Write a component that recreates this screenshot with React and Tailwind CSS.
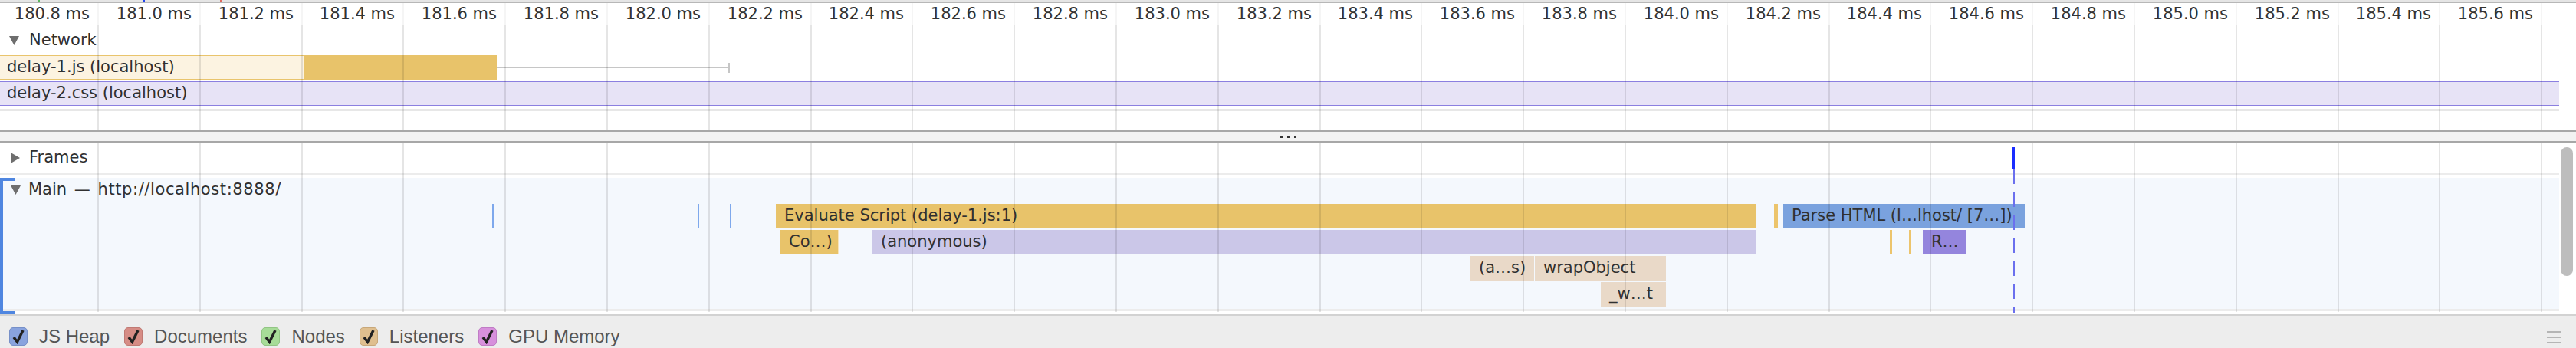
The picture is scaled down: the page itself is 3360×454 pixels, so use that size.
import React from "react";

const TICKS = Array.from({ length: 25 }, (_, i) => ({
  x: Math.round(127 + 132.8 * i),
  label: `${(180.8 + 0.2 * i).toFixed(1)} ms`,
}));

const BARS = [
  { row: 0, x: 642, w: 2, cls: "bg-[#7ea8ec]" },
  { row: 0, x: 910, w: 2, cls: "bg-[#7ea8ec]" },
  { row: 0, x: 952, w: 2, cls: "bg-[#7ea8ec]" },
  { row: 0, x: 1012, w: 1279, label: "Evaluate Script (delay-1.js:1)", cls: "bg-[#e8c36a]" },
  { row: 0, x: 2314, w: 5, cls: "bg-[#ecc46c]" },
  { row: 0, x: 2326, w: 315, label: "Parse HTML (l…lhost/ [7…])", cls: "bg-[#7aa2de]" },
  { row: 1, x: 1018, w: 75, label: "Co…)", cls: "bg-[#e8c36a]" },
  { row: 1, x: 1093, w: 2, cls: "bg-[#f6e4bd]" },
  { row: 1, x: 1138, w: 1153, label: "(anonymous)", cls: "bg-[#cbc7e8]" },
  { row: 1, x: 2465, w: 3, cls: "bg-[#ecc46c]" },
  { row: 1, x: 2490, w: 3, cls: "bg-[#ecc46c]" },
  { row: 1, x: 2508, w: 57, label: "R…", cls: "bg-[#9485dd]" },
  { row: 2, x: 1918, w: 83, label: "(a…s)", cls: "bg-[#e9d9c8]" },
  { row: 2, x: 2002, w: 171, label: "wrapObject", cls: "bg-[#e9d9c8]" },
  { row: 3, x: 2088, w: 85, label: "_w…t", cls: "bg-[#e9d9c8]" },
];

const COUNTERS = [
  { label: "JS Heap", cls: "bg-[#89a3de] border-[#7790c8]" },
  { label: "Documents", cls: "bg-[#d68c85] border-[#c07a74]" },
  { label: "Nodes", cls: "bg-[#a7dc98] border-[#92c584]" },
  { label: "Listeners", cls: "bg-[#dfbf8f] border-[#c8a87a]" },
  { label: "GPU Memory", cls: "bg-[#d790dc] border-[#c07cc5]" },
];

function Caret({ open }) {
  return open ? (
    <svg width="13" height="12" viewBox="0 0 13 12" className="shrink-0">
      <polygon points="0,0 13,0 6.5,12" fill="#6e6e6e" />
    </svg>
  ) : (
    <svg width="12" height="14" viewBox="0 0 12 14" className="shrink-0">
      <polygon points="0,0 12,7 0,14" fill="#6e6e6e" />
    </svg>
  );
}

function Check({ cls }) {
  return (
    <span className={`flex h-[24px] w-[24px] shrink-0 items-center justify-center rounded-[5px] border ${cls}`}>
      <svg width="18" height="20" viewBox="0 0 18 20">
        <polyline points="3,11 7.5,17 15,2" fill="none" stroke="#222" strokeWidth="3.5" strokeLinejoin="miter" />
      </svg>
    </span>
  );
}

export default function App() {
  return (
    <div className="relative h-[454px] w-[3360px] overflow-hidden bg-white font-['DejaVu_Sans',sans-serif] text-[21px] text-[#303030]">
      {/* overview strip */}
      <div className="relative h-[4px] border-b border-[#b7b7b7] bg-[#e5e5e5]">
        <div className="absolute left-[50px] top-0 h-[3px] w-[2px] bg-[#5cb85c]" />
        <div className="absolute left-[187px] top-0 h-[3px] w-[2px] bg-[#2244ee]" />
        <div className="absolute left-[287px] top-0 h-[3px] w-[2px] bg-[#e06a5e]" />
      </div>

      {/* ruler */}
      <div className="relative h-[29px] w-[3338px]">
        {TICKS.map((t) => (
          <React.Fragment key={t.label}>
            <div className="absolute top-0 h-full w-[2px] bg-black/[0.04]" style={{ left: t.x }} />
            <div
              className="absolute top-0 flex h-full items-center justify-end whitespace-nowrap text-[#333]"
              style={{ left: t.x - 210, width: 200 }}
            >
              {t.label}
            </div>
          </React.Fragment>
        ))}
      </div>

      {/* network */}
      <div className="w-[3338px]">
        <div className="flex h-[39px] items-center gap-[13px] pl-[12px]">
          <Caret open />
          <span>Network</span>
        </div>
        <div className="relative h-[32px]">
          <div className="absolute left-0 top-0 h-full w-[396px] border-y border-[#e9c46c] bg-[#fcf3e1]" />
          <div className="absolute left-[397px] top-0 h-full w-[251px] bg-[#e8c36a]" />
          <div className="absolute left-[648px] top-[15px] h-[2px] w-[303px] bg-[#c6c6c6]" />
          <div className="absolute left-[950px] top-[10px] h-[13px] w-[2px] bg-[#c6c6c6]" />
          <div className="relative flex h-full items-center whitespace-nowrap pl-[9px]">delay-1.js (localhost)</div>
        </div>
        <div className="h-[2px]" />
        <div className="flex h-[32px] items-center whitespace-nowrap border-y border-[#8b7fe0] bg-[#e7e3f6] pl-[9px]">
          delay-2.css (localhost)
        </div>
        <div className="h-[4px]" />
        <div className="h-[3px] bg-[#e7e7e7]" />
        <div className="h-[25px]" />
      </div>

      {/* splitter */}
      <div className="relative z-20 flex h-[16px] items-center justify-center gap-[6px] border-y-2 border-[#a7a7a7] bg-[#f2f2f2]">
        <span className="h-[3px] w-[3px] bg-[#333]" />
        <span className="h-[3px] w-[3px] bg-[#333]" />
        <span className="h-[3px] w-[3px] bg-[#333]" />
      </div>

      {/* frames */}
      <div className="relative">
        <div className="flex h-[40px] w-[3338px] items-center gap-[12px] pl-[14px]">
          <Caret />
          <span>Frames</span>
        </div>
        <div className="h-[2px] w-[3338px] bg-[#ececec]" />
        <div className="absolute right-[4px] top-[6px] h-[168px] w-[16px] rounded-full bg-[#bdbdbd]" />
      </div>

      {/* main thread */}
      <div className="relative h-[178px] w-[3338px]">
        <div className="absolute left-0 top-0 h-full w-[4px] bg-[#4f86e0]" />
        <div className="absolute left-0 top-0 h-[4px] w-[20px] bg-[#4f86e0]" />
        <div className="absolute bottom-0 left-0 h-[4px] w-[20px] bg-[#4f86e0]" />
        <div className="mt-[4px] h-[171px] bg-[#f4f8fd]">
          <div className="flex h-[32px] items-center gap-[10px] pl-[14px] whitespace-nowrap">
            <Caret open />
            <span>
              Main <span className="mx-[3px]">—</span> <span className="tracking-[0.6px]">http://localhost:8888/</span>
            </span>
          </div>
          <div className="relative mt-[2px] h-[136px]">
            {BARS.map((b, i) => (
              <div
                key={i}
                className={`absolute flex h-[32px] items-center overflow-hidden whitespace-nowrap ${b.label ? "pl-[11px]" : ""} ${b.cls}`}
                style={{ left: b.x, width: b.w, top: b.row * 34 }}
              >
                {b.label}
              </div>
            ))}
          </div>
        </div>
        <div className="h-[3px] bg-[#ececec]" />
      </div>

      {/* counters toolbar */}
      <div className="flex h-[48px] items-start border-t-2 border-[#d2d2d2] bg-[#ededed] pl-[12px] pt-[15px] font-['Liberation_Sans',Arial,sans-serif] text-[24px] leading-[24px] text-[#555]">
        <div className="flex items-center gap-[19px]">
          {COUNTERS.map((c) => (
            <label key={c.label} className="flex items-center gap-[15px]">
              <Check cls={c.cls} />
              <span>{c.label}</span>
            </label>
          ))}
        </div>
        <div className="ml-auto mr-[20px] mt-[5px] flex flex-col gap-[5px]">
          <span className="h-[2px] w-[18px] bg-[#b5b5b5]" />
          <span className="h-[2px] w-[18px] bg-[#b5b5b5]" />
          <span className="h-[2px] w-[18px] bg-[#b5b5b5]" />
        </div>
      </div>

      {/* grid lines */}
      <div className="pointer-events-none absolute left-0 top-[33px] z-10 h-[374px] w-[3338px]">
        {TICKS.map((t) => (
          <div key={t.x} className="absolute top-0 h-full w-[2px] bg-black/10" style={{ left: t.x }} />
        ))}
      </div>

      {/* frame marker and dashed line */}
      <div className="pointer-events-none absolute left-[2624px] top-[192px] z-10 h-[28px] w-[4px] bg-[#1a2dff]" />
      <svg className="pointer-events-none absolute left-[2625px] top-[221px] z-10" width="4" height="187">
        <line x1="2" y1="0" x2="2" y2="187" stroke="#6b70ee" strokeWidth="2" strokeDasharray="19 11" />
      </svg>
    </div>
  );
}
